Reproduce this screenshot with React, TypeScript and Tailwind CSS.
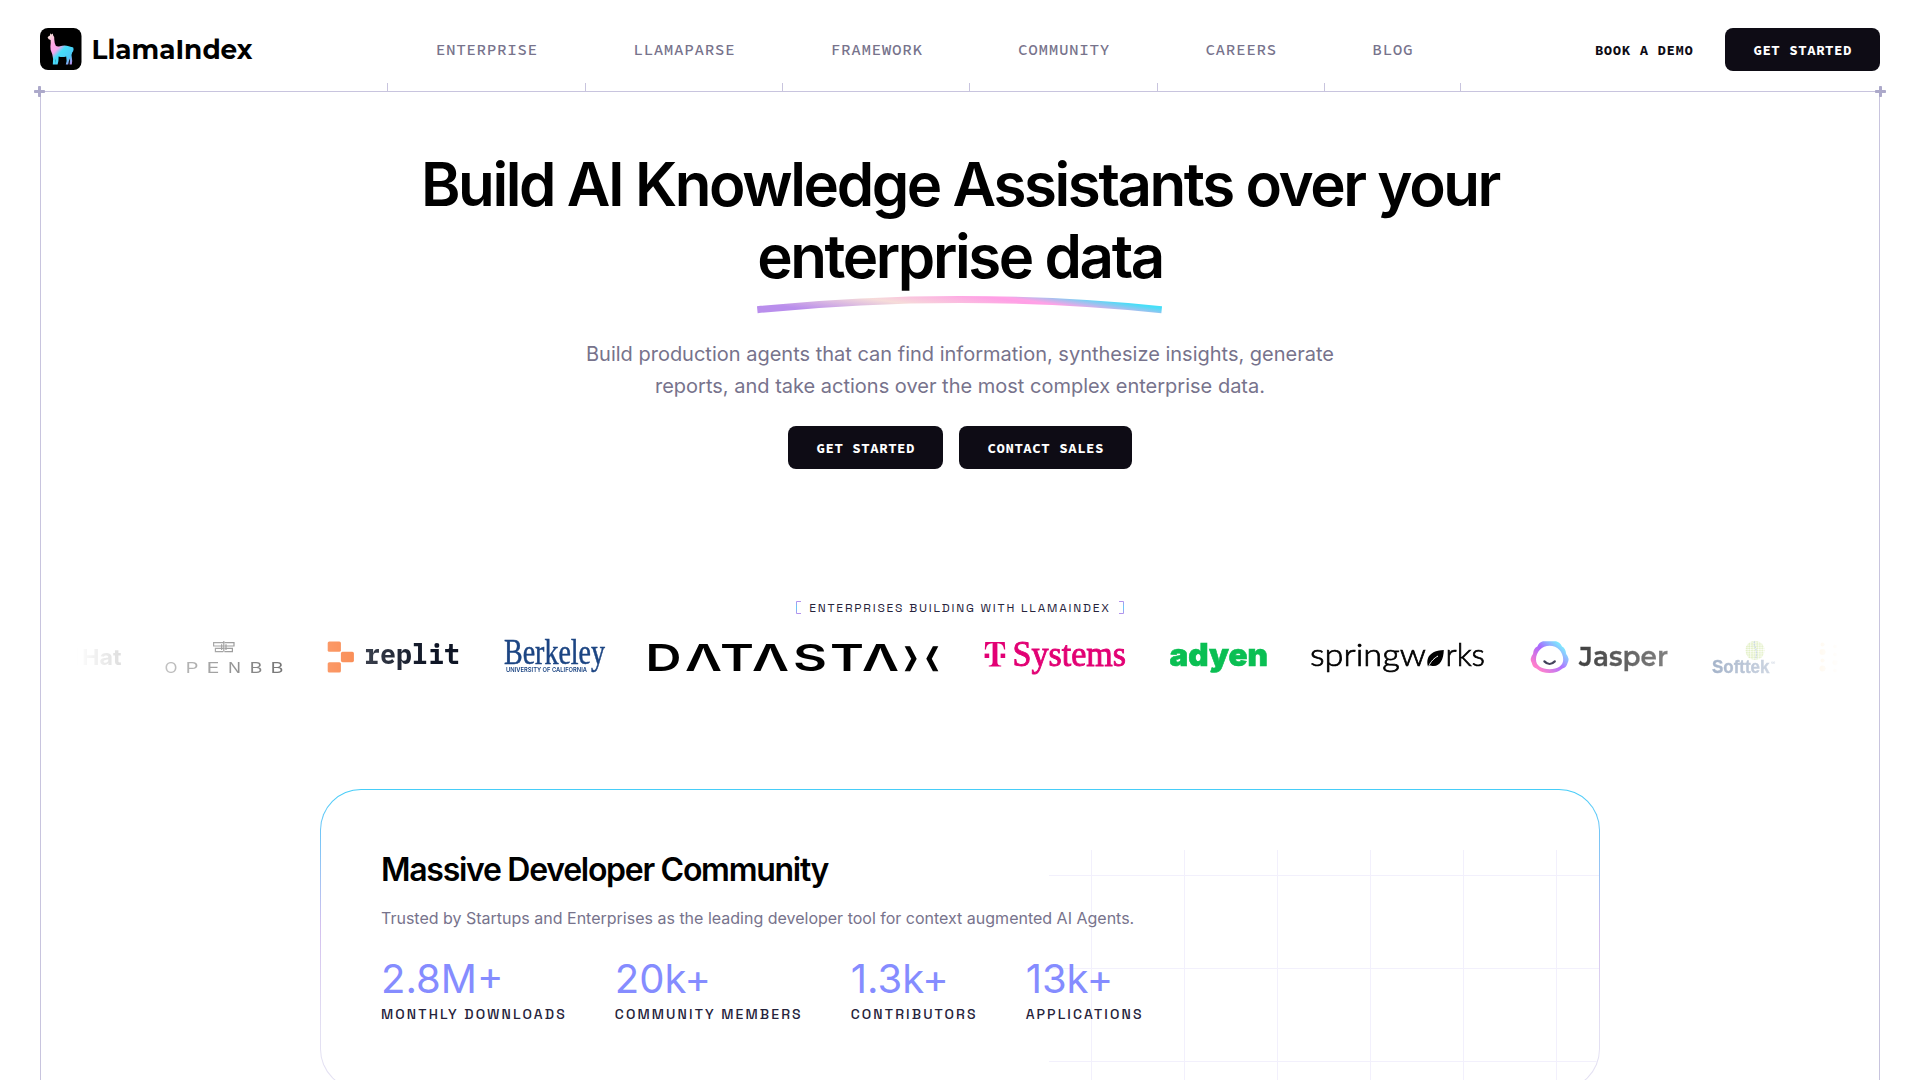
import React from "react";

const NAV = ["ENTERPRISE", "LLAMAPARSE", "FRAMEWORK", "COMMUNITY", "CAREERS", "BLOG"];

const STATS = [
  { value: "2.8M+", label: "MONTHLY DOWNLOADS" },
  { value: "20k+", label: "COMMUNITY MEMBERS" },
  { value: "1.3k+", label: "CONTRIBUTORS" },
  { value: "13k+", label: "APPLICATIONS" },
];

const MONO = "font-['Source_Code_Pro','Liberation_Mono',monospace]";
const GROTESK = "font-['Space_Grotesk','Inter',sans-serif]";

type WordProps = {
  x: number;
  y: number;
  w: number;
  size: number;
  font?: string;
  weight?: number;
  fill?: string;
  thicken?: number;
  children: string;
};

function Word({ x, y, w, size, font = "Inter, sans-serif", weight = 400, fill = "#000", thicken = 0, children }: WordProps) {
  return (
    <text
      x={x}
      y={y}
      textLength={w}
      lengthAdjust="spacingAndGlyphs"
      fontSize={size}
      fontFamily={font}
      fontWeight={weight}
      fill={fill}
      stroke={thicken ? fill : "none"}
      strokeWidth={thicken}
    >
      {children}
    </text>
  );
}

function Brand() {
  return (
    <svg className="h-[42px] w-[214px] shrink-0 overflow-visible" viewBox="0 0 214 42">
      <defs>
        <linearGradient id="llama" x1="8" y1="7" x2="36" y2="34" gradientUnits="userSpaceOnUse">
          <stop offset="0.05" stopColor="#f6dcd9" />
          <stop offset="0.25" stopColor="#ffa6e4" />
          <stop offset="0.42" stopColor="#f3a5ea" />
          <stop offset="0.54" stopColor="#45dff8" />
          <stop offset="0.78" stopColor="#4cc9f8" />
          <stop offset="0.95" stopColor="#b78be8" />
        </linearGradient>
      </defs>
      <rect width="41.5" height="42" rx="8" fill="#000" />
      <path
        fill="url(#llama)"
        d="M7.6 9.6Q8.4 8 10 7.6L10.2 5.2L11.4 6.6L12.8 5.4L13.2 7.6Q14.6 8.8 14.3 11.4Q14.4 15 15.8 17.8Q17.4 18.8 20 18.2Q24.6 17 28.8 18.2L31.4 19Q33.8 18.8 33.6 21.2Q33.4 23.4 32.2 24.6Q31.2 26.6 31.8 29.2Q32.6 32.6 31.8 36.6H29.6Q30.4 33 29.6 30.4L28.8 33.6L28.2 36.6H25.8Q27.2 33 26.2 28.6Q22.4 29.6 18.6 28.6Q18.8 33 17.6 36.6H15.2Q16.2 33 15.4 30.4Q15.6 33.6 15.2 36.6H12.8Q13.8 31 12.2 26Q10 22.6 10.4 18.6Q11 15 10.6 12Q8.4 12 7.6 9.6Z"
      />
      <Word x={51.5} y={31} w={161} size={27} weight={700} font="Montserrat, Inter, sans-serif">
        LlamaIndex
      </Word>
    </svg>
  );
}

function Plus({ className }: { className: string }) {
  return (
    <svg className={`absolute z-10 h-[11px] w-[11px] ${className}`} viewBox="0 0 11 11" fill="#aca9ca">
      <rect x="4" y="0" width="3" height="11" rx="0.8" />
      <rect x="0" y="4" width="11" height="3" rx="0.8" />
    </svg>
  );
}

function DarkButton({ children }: { children: string }) {
  return (
    <button
      className={`flex h-[43px] items-center rounded-lg bg-[#0e0c15] pt-px pr-7 pl-[28.5px] text-[14px] font-bold tracking-[0.56px] text-white ${MONO}`}
    >
      {children}
    </button>
  );
}

function Bracket({ flip }: { flip?: boolean }) {
  return (
    <svg className={flip ? "h-[13px] w-[5px] -scale-x-100" : "h-[13px] w-[5px]"} viewBox="0 0 5 13">
      <defs>
        <linearGradient id={flip ? "brR" : "brL"} x1="0" y1="0" x2="0" y2="13" gradientUnits="userSpaceOnUse">
          <stop offset="0" stopColor="#b98eec" />
          <stop offset="0.5" stopColor="#62cdf8" />
          <stop offset="1" stopColor="#b98eec" />
        </linearGradient>
      </defs>
      <path d="M5 .5H.5V12.5H5" fill="none" stroke={`url(#${flip ? "brR" : "brL"})`} />
    </svg>
  );
}

function Logos() {
  const serif = "'Liberation Serif', serif";
  const angle = "'DejaVu Sans', sans-serif";
  const datastax: [string, number, number][] = [
    ["D", -3.4, 36],
    ["Λ", 36, 37],
    ["T", 71, 34],
    ["Λ", 103, 37],
    ["S", 144, 34],
    ["T", 181, 34],
    ["Λ", 213, 37],
  ];
  return (
    <div className="-my-3 mr-9 ml-[35px] flex gap-[44px] overflow-hidden py-3 [mask-image:linear-gradient(to_right,transparent,black_20%,black_80%,transparent)]">
      {/* Red Hat, leaving on the left */}
      <svg className="h-8 w-[45px] shrink-0 overflow-visible" viewBox="0 0 45 32">
        <rect x="0" y="7" width="2" height="17" fill="#000" />
        <Word x={6} y={24} w={39.5} size={22} weight={700}>Hat</Word>
      </svg>
      {/* OpenBB */}
      <svg className="h-8 w-[118px] shrink-0 overflow-visible" viewBox="0 0 118 32" fill="none" stroke="#222">
        <g strokeWidth="1.2">
          <path d="M58.8 0V10.6M58.2 1.6H48.6V5H58.2M58.2 7.4H50.4V10.6H58.2M56.6 3.2V9" />
          <path d="M59.4 1.6H69V5H59.4M59.4 7.4H67.4V10.6H59.4M61 3.2V9" />
        </g>
        <g stroke="none">
          {["O", "P", "E", "N", "B", "B"].map((c, i) => (
            <Word key={i} x={[-0.5, 20.5, 41.5, 63, 84.5, 105.5][i]} y={31.6} w={13} size={14.5} weight={400} fill="#111">
              {c}
            </Word>
          ))}
        </g>
      </svg>
      {/* Replit */}
      <svg className="h-8 w-[133px] shrink-0 overflow-visible" viewBox="0 0 133 32">
        <g fill="#f9702a">
          <rect x="0.7" y="0.4" width="13.2" height="10.4" rx="1.6" />
          <rect x="13.9" y="10.8" width="13" height="10.4" rx="1.6" />
          <rect x="0.7" y="21.2" width="13.2" height="10.4" rx="1.6" />
        </g>
        <Word x={37} y={23.4} w={96} size={28} weight={700} fill="#0e1525" font="'IBM Plex Mono', 'DejaVu Sans Mono', monospace">
          replit
        </Word>
      </svg>
      {/* Berkeley */}
      <svg className="h-8 w-[101px] shrink-0 overflow-visible" viewBox="0 0 101 32">
        <Word x={0} y={23.4} w={101} size={35} fill="#1c4583" font={serif} thicken={0.5}>Berkeley</Word>
        <Word x={2} y={31.4} w={81} size={6.8} weight={600} fill="#1c4583">UNIVERSITY OF CALIFORNIA</Word>
      </svg>
      {/* DataStax */}
      <svg className="h-8 w-[291px] shrink-0 overflow-visible" viewBox="0 0 291 32">
        {datastax.map(([c, x, w], i) => (
          <Word key={i} x={x} y={30} w={w} size={37} weight={600}>
            {c}
          </Word>
        ))}
        <Word x={253} y={25.5} w={18} size={27} font={angle} thicken={0.9}>⟩</Word>
        <Word x={274} y={25.5} w={18} size={27} font={angle} thicken={0.9}>⟨</Word>
      </svg>
      {/* T-Systems */}
      <svg className="h-8 w-[142px] shrink-0 overflow-visible" viewBox="0 0 142 32" fill="#e20074">
        <path d="M1.2 1H20.8L21.2 8.6H20C19.6 4.4 17.6 2.4 13.4 2.3V20.6C13.4 23.6 14.2 24.4 17.2 24.6V25.6H4.8V24.6C7.8 24.4 8.6 23.6 8.6 20.6V2.3C4.4 2.4 2.4 4.4 2 8.6H0.8Z" />
        <rect x="0.6" y="12.6" width="4.6" height="4.4" />
        <rect x="16.6" y="12.6" width="4.6" height="4.4" />
        <Word x={28.5} y={25} w={113.5} size={36} fill="#e20074" font={serif} thicken={0.9}>Systems</Word>
      </svg>
      {/* Adyen */}
      <svg className="h-8 w-[97px] shrink-0 overflow-visible" viewBox="0 0 97 32">
        <Word x={-0.5} y={24.5} w={98.5} size={31} weight={900} fill="#0abf53" thicken={0.6}>adyen</Word>
      </svg>
      {/* Springworks */}
      <svg className="h-8 w-[174px] shrink-0 overflow-visible" viewBox="0 0 174 32">
        <Word x={-1} y={24.5} w={116} size={31} font="Lato, sans-serif" weight={300} thicken={0.7}>springw</Word>
        <path d="M117 25.4C114.6 16.8 119 9.6 132.8 9C132.6 20 127.6 27.4 119.4 24.4L117 25.4Z" />
        <path d="M117.5 25.5C120 20 123.4 17 127 15" stroke="#fff" strokeWidth="1" fill="none" />
        <Word x={134.5} y={24.5} w={39.5} size={31} font="Lato, sans-serif" weight={300} thicken={0.7}>rks</Word>
      </svg>
      {/* Jasper */}
      <svg className="h-8 w-[139px] shrink-0 overflow-visible" viewBox="0 0 139 32">
        <defs>
          <linearGradient id="jasper" x1="32" y1="2" x2="6" y2="30" gradientUnits="userSpaceOnUse">
            <stop offset="0.05" stopColor="#5fe0ff" />
            <stop offset="0.45" stopColor="#9a50ff" />
            <stop offset="0.9" stopColor="#ff6cc4" />
          </linearGradient>
        </defs>
        <path
          fill="url(#jasper)"
          fillRule="evenodd"
          d="M14 .2H27Q31 1 33 5.6Q36.6 7.2 37.2 13Q41 17.6 38.6 22Q37.4 26.6 33.6 27.4Q28 32 20.6 32Q12.6 32 7.4 27.4Q3.8 26.6 2.8 22Q.2 17.6 4 13Q4.4 7.2 8.4 5.6Q10 1 14 .2ZM20.6 4.8C13 4.8 7 11 7 18.6C7 25 12.6 28.2 20.6 28.2C28.6 28.2 34.2 25 34.2 18.6C34.2 11 28.2 4.8 20.6 4.8Z"
        />
        <path d="M15.4 20.4Q20.6 25.6 25.8 20.4" fill="none" stroke="#1d1d3a" strokeWidth="2.2" strokeLinecap="round" />
        <Word x={50} y={24.5} w={89} size={27} weight={600} fill="#000" font="Montserrat, Inter, sans-serif" thicken={0.3}>Jasper</Word>
      </svg>
      {/* Softtek */}
      <svg className="h-8 w-[64px] shrink-0 overflow-visible" viewBox="0 0 64 32">
        <defs>
          <pattern id="dots" width="2.6" height="2.2" patternUnits="userSpaceOnUse">
            <rect width="2.2" height="1.8" rx=".8" fill="#8fc31f" />
          </pattern>
        </defs>
        <circle cx="43" cy="9.4" r="9.6" fill="url(#dots)" />
        <path d="M42.6 0.5C40.6 5 47 8.6 43.4 18.4" fill="none" stroke="#2d5da8" strokeWidth="1.3" strokeDasharray="1.6 1" />
        <Word x={0} y={31.6} w={57.5} size={18} weight={700} fill="#0c3470" font="'Liberation Sans', sans-serif" thicken={0.4}>Softtek</Word>
        <Word x={59} y={24} w={4.5} size={5} fill="#0c3470">®</Word>
      </svg>
      <svg className="h-8 w-[24px] shrink-0 overflow-visible" viewBox="0 0 24 32" fill="#fbb034">
        <circle cx="2.5" cy="3.4" r="2" />
        <circle cx="2.5" cy="11" r="3" />
        <circle cx="2.5" cy="19.4" r="2" />
        <circle cx="2.5" cy="27.4" r="3" />
        <circle cx="15" cy="5.6" r="1.8" />
        <circle cx="15" cy="13.6" r="1.8" />
        <circle cx="15" cy="21.6" r="2.6" />
        <circle cx="15" cy="29.6" r="1.8" />
      </svg>
    </div>
  );
}

export default function App() {
  return (
    <div className="h-[1080px] w-full overflow-hidden bg-white font-['Inter',sans-serif]">
      <header className="relative mx-10 flex h-[92px] items-stretch border-b border-[#c8c4de]">
        <Plus className="-bottom-[6px] -left-[6px]" />
        <Plus className="-right-[6px] -bottom-[6px]" />
        <div className="flex w-[347px] shrink-0 items-center pt-[7px]">
          <Brand />
        </div>
        <nav className="flex items-end">
          <span className="h-2 w-px bg-[#c8c4de]" />
          {NAV.map((item) => (
            <div key={item} className="flex h-full items-end">
              <a className={`flex h-full items-center px-[47.75px] pt-[7px] text-[16px] font-medium tracking-[0.6px] text-[#77738c] ${MONO}`}>
                {item}
              </a>
              <span className="-ml-px h-2 w-px bg-[#c8c4de]" />
            </div>
          ))}
        </nav>
        <div className="ml-auto flex items-center gap-[31.5px] pt-2">
          <span className={`pt-px text-[14px] font-bold tracking-[0.56px] text-[#0e0c15] ${MONO}`}>BOOK A DEMO</span>
          <DarkButton>GET STARTED</DarkButton>
        </div>
      </header>

      <main className="mx-10 flex h-[1000px] flex-col border-x border-[#c8c4de]">
        <section className="flex flex-col items-center">
          <h1 className="pt-14 text-center text-[60px] leading-[72px] font-semibold tracking-[-2.4px] text-black">
            Build AI Knowledge Assistants over your
            <br />
            enterprise data
          </h1>
          <svg className="mt-1 mr-px h-[20px] w-[405px]" viewBox="0 0 405 20">
            <defs>
              <linearGradient id="swoosh" x1="0" y1="13.7" x2="9.3" y2="-47.7" gradientUnits="userSpaceOnUse">
                <stop offset="0.12" stopColor="#b98eec" />
                <stop offset="0.45" stopColor="#f6dcd9" />
                <stop offset="0.76" stopColor="#ff9fe6" />
                <stop offset="0.8" stopColor="#ffa2e6" />
                <stop offset="1.06" stopColor="#45dff8" />
              </linearGradient>
            </defs>
            <path d="M0.3 13.7Q202.5 -6.7 404.7 13.7" fill="none" stroke="url(#swoosh)" strokeWidth="7" />
          </svg>
          <p className="mt-[22px] text-center text-[20px] leading-8 text-[#77738c]">
            Build production agents that can find information, synthesize insights, generate
            <br />
            reports, and take actions over the most complex enterprise data.
          </p>
          <div className="mt-6 flex gap-4">
            <DarkButton>GET STARTED</DarkButton>
            <DarkButton>CONTACT SALES</DarkButton>
          </div>
        </section>

        <section className="mt-[131px]">
          <div className={`flex h-[15px] items-center justify-center gap-[8px] text-[12px] tracking-[1.8px] text-[#26233b] ${GROTESK}`}>
            <Bracket />
            <span>ENTERPRISES BUILDING WITH LLAMAINDEX</span>
            <Bracket flip />
          </div>
          <div className="mt-[26px]">
            <Logos />
          </div>
        </section>

        <section className="mx-auto mt-[116px] h-[301px] w-[1280px] shrink-0 rounded-[41px] bg-[linear-gradient(to_bottom,#45cdf8,#74c6f7_15%,#d3c0ee_45%,#e3e0f2_80%)] p-px">
          <div className="relative h-full overflow-hidden rounded-[40px] bg-white px-[60px]">
            <div className="absolute top-[60px] right-0 bottom-0 w-[550px] bg-[linear-gradient(to_right,#f2f0fc_1px,transparent_1px),linear-gradient(to_bottom,#f2f0fc_1px,transparent_1px)] bg-[size:93px_93px] bg-[position:42px_25px]" />
            <div className="relative">
              <h2 className="pt-[60px] text-[32px] leading-10 font-semibold tracking-[-1.28px] text-black">
                Massive Developer Community
              </h2>
              <p className="mt-4 text-base leading-6 text-[#77738c]">
                Trusted by Startups and Enterprises as the leading developer tool for context augmented AI Agents.
              </p>
              <div className="mt-[25px] flex gap-12">
                {STATS.map((s) => (
                  <div key={s.label}>
                    <div className="text-[40px] leading-[48px] text-[#858cff]">{s.value}</div>
                    <div className={`mt-px text-[14px] leading-5 font-medium tracking-[2.1px] whitespace-nowrap text-[#26233b] ${GROTESK}`}>
                      {s.label}
                    </div>
                  </div>
                ))}
              </div>
            </div>
          </div>
        </section>
      </main>
    </div>
  );
}
